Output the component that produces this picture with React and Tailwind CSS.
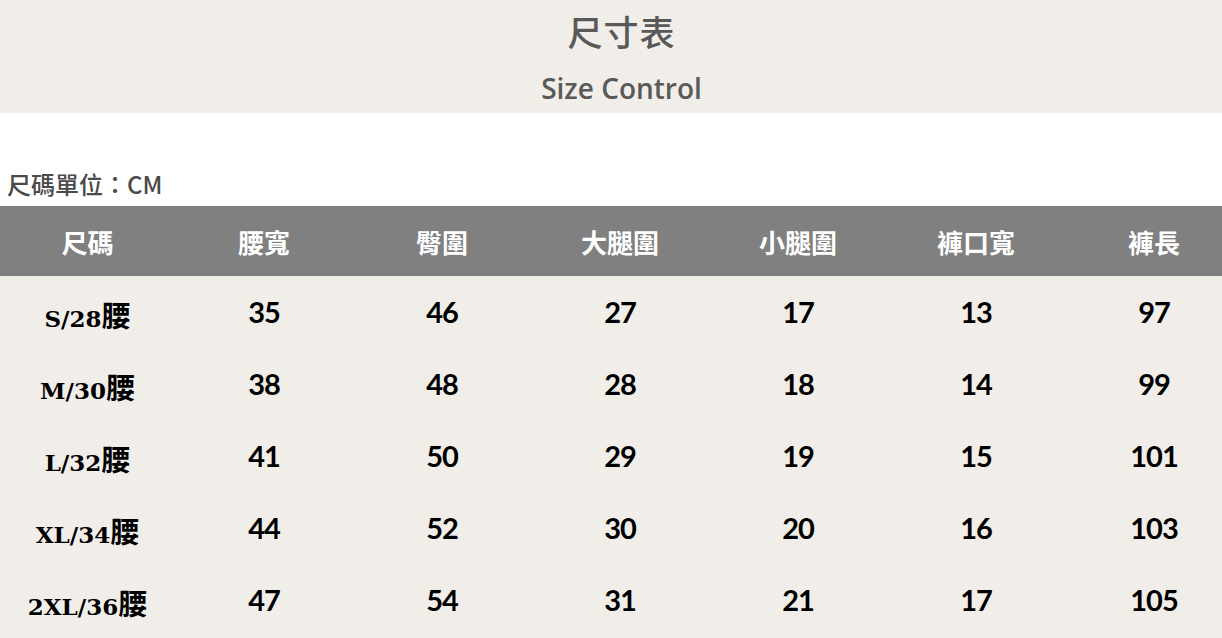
import React from "react";

const headers = ["尺碼", "腰寬", "臀圍", "大腿圍", "小腿圍", "褲口寬", "褲長"];
const rows = [
  ["S/28", 35, 46, 27, 17, 13, 97],
  ["M/30", 38, 48, 28, 18, 14, 99],
  ["L/32", 41, 50, 29, 19, 15, 101],
  ["XL/34", 44, 52, 30, 20, 16, 103],
  ["2XL/36", 47, 54, 31, 21, 17, 105],
];

const sans = { fontFamily: '"Noto Sans", "Noto Sans CJK TC", sans-serif' };

export default function App() {
  return (
    <div className="w-[1222px] h-[638px] overflow-hidden bg-[#f1eeea]" style={sans}>
      <div className="w-[1243px]">
        <div className="h-[113px] bg-[#f1eeea] flex flex-col items-center text-[#595959]">
          <div className="mt-[8px] text-[35px] leading-[46px] font-medium tracking-[1px] [font-family:'Noto_Sans_CJK_TC',sans-serif]">尺寸表</div>
          <div className="mt-[16px] text-[28px] leading-[36px] font-semibold [font-family:'Open_Sans',sans-serif]">Size Control</div>
        </div>
        <div className="h-[93px] bg-white flex items-end pb-[7px] pl-[7px]">
          <div className="text-[24px] leading-[30px] font-medium text-[#4a4a4a] [font-family:'Noto_Sans_CJK_TC',sans-serif]">尺碼單位：CM</div>
        </div>
        <div className="grid grid-cols-[175px_repeat(6,178px)] h-[70px] bg-[#808080] text-white items-center">
          {headers.map((h) => (
            <div key={h} className="text-center text-[26px] font-bold [font-family:'Noto_Sans_CJK_TC',sans-serif]">{h}</div>
          ))}
        </div>
        {rows.map((r, i) => (
          <div key={i} className="grid grid-cols-[175px_repeat(6,178px)] h-[72px] items-center border-b border-[#eeebe6]">
            <div className="text-center font-bold text-black pt-[6px] whitespace-nowrap">
              <span className="text-[23px] [font-family:'DejaVu_Serif',serif]">{r[0]}</span>
              <span className="text-[29px] [font-family:'Noto_Sans_CJK_TC',sans-serif]">腰</span>
            </div>
            {r.slice(1).map((v, j) => (
              <div key={j} className="text-center text-[29px] font-bold text-black tracking-[-1px] [font-family:'Lato',sans-serif]">{v}</div>
            ))}
          </div>
        ))}
      </div>
    </div>
  );
}
